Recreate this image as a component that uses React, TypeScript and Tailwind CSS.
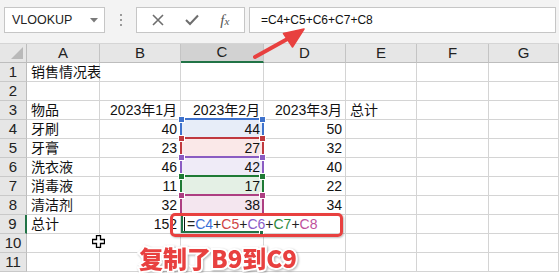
import React from "react";

const widths = [27, 73, 81, 83, 82, 71, 72, 70];
const letters = ["", "A", "B", "C", "D", "E", "F", "G"];

type Row = { a?: string; b?: string; c?: string; d?: string; e?: string };
const rows: Row[] = [
  { a: "销售情况表" },
  {},
  { a: "物品", b: "2023年1月", c: "2023年2月", d: "2023年3月", e: "总计" },
  { a: "牙刷", b: "40", c: "44", d: "50" },
  { a: "牙膏", b: "23", c: "27", d: "32" },
  { a: "洗衣液", b: "46", c: "42", d: "40" },
  { a: "消毒液", b: "11", c: "17", d: "22" },
  { a: "清洁剂", b: "32", c: "38", d: "34" },
  { a: "总计", b: "152" },
  {},
  {},
];

const cFills: Record<number, string> = {
  4: "bg-[#e7edf8]",
  5: "bg-[#fae8e8]",
  6: "bg-[#efebf7]",
  7: "bg-[#e4f0e5]",
  8: "bg-[#f4e6ef]",
};

const ranges = [
  { row: 4, border: "border-[#3f72cc]", sq: "bg-[#3f72cc]" },
  { row: 5, border: "border-[#c0393f]", sq: "bg-[#c0393f]" },
  { row: 6, border: "border-[#8a5cc2]", sq: "bg-[#8a5cc2]" },
  { row: 7, border: "border-[#1f7a35]", sq: "bg-[#1f7a35]" },
  { row: 8, border: "border-[#ad3f82]", sq: "bg-[#ad3f82]" },
];

function Cell({
  w,
  children,
  align = "left",
  fill = "",
}: {
  w: number;
  children?: React.ReactNode;
  align?: "left" | "right";
  fill?: string;
}) {
  return (
    <div
      className={`h-full shrink-0 border-r border-b border-[#d4d4d4] flex items-center whitespace-nowrap overflow-visible text-[14px] text-[#111] ${
        align === "right" ? "justify-end pr-[3px]" : "pl-[4px]"
      } ${fill}`}
      style={{ width: w }}
    >
      {children}
    </div>
  );
}

function RowHeader({ n, active }: { n: number; active?: boolean }) {
  return (
    <div
      className={`h-full shrink-0 w-[27px] bg-[#e6e6e6] border-b border-[#c9c9c9] flex items-center justify-center text-[15px] text-[#222] ${
        active ? "border-r-2 border-r-[#217346]" : "border-r border-r-[#bdbdbd]"
      }`}
    >
      {n}
    </div>
  );
}

export default function App() {
  return (
    <div className="relative w-[559px] h-[273px] overflow-hidden bg-white font-['Liberation_Sans','Noto_Sans_CJK_SC',sans-serif]">
      {/* Toolbar */}
      <div className="h-[44px] bg-[#f3f3f3] border-b border-[#d5d5d5] flex items-start pt-[7px] pl-[4px] pr-[3px]">
        <div className="w-[101px] h-[26px] bg-white border border-[#c6c6c6] flex items-center justify-between pl-[7px] pr-[6px] text-[12.5px] text-[#222]">
          <span>VLOOKUP</span>
          <svg width="8" height="5" viewBox="0 0 8 5">
            <path d="M0 0 L8 0 L4 4.5 Z" fill="#7a7a7a" />
          </svg>
        </div>
        <div className="w-[31px] h-[26px] flex flex-col items-center justify-center gap-[3px]">
          <div className="w-[2px] h-[2px] bg-[#9a9a9a]" />
          <div className="w-[2px] h-[2px] bg-[#9a9a9a]" />
          <div className="w-[2px] h-[2px] bg-[#9a9a9a]" />
        </div>
        <div className="w-[109px] h-[26px] bg-white border border-[#c6c6c6] flex items-center justify-around px-[4px]">
          <svg width="12" height="12" viewBox="0 0 12 12">
            <path d="M1 1 L11 11 M11 1 L1 11" stroke="#6e6e6e" strokeWidth="1.6" />
          </svg>
          <svg width="14" height="12" viewBox="0 0 14 12">
            <path d="M1 6 L5 10 L13 1.5" stroke="#6e6e6e" strokeWidth="2" fill="none" />
          </svg>
          <span className="font-['Liberation_Serif',serif] italic text-[15px] text-[#555] leading-none">
            f<span className="text-[11px]">x</span>
          </span>
        </div>
        <div className="ml-[4px] flex-1 h-[26px] bg-white border border-[#c6c6c6] flex items-center pl-[11px] text-[12px] text-[#111]">
          =C4+C5+C6+C7+C8
        </div>
      </div>

      {/* Column headers */}
      <div className="flex h-[19px]">
        {letters.map((l, i) =>
          i === 0 ? (
            <div
              key={i}
              className="h-full shrink-0 bg-[#e6e6e6] border-r border-b border-[#bdbdbd] relative"
              style={{ width: widths[0] }}
            >
              <svg className="absolute right-[3px] bottom-[3px]" width="12" height="12" viewBox="0 0 12 12">
                <path d="M12 0 L12 12 L0 12 Z" fill="#b9b9b9" />
              </svg>
            </div>
          ) : (
            <div
              key={i}
              className={`h-full shrink-0 flex items-center justify-center text-[15px] text-[#222] border-r border-[#c4c4c4] ${
                l === "C"
                  ? "bg-[#d2d2d2] border-b-2 border-b-[#217346]"
                  : "bg-[#e6e6e6] border-b border-b-[#bdbdbd]"
              }`}
              style={{ width: widths[i] }}
            >
              {l}
            </div>
          )
        )}
      </div>

      {/* Rows */}
      {rows.map((r, idx) => {
        const n = idx + 1;
        return (
          <div key={n} className="flex h-[19px]">
            <RowHeader n={n} active={n === 9} />
            <Cell w={widths[1]}>{r.a}</Cell>
            <Cell w={widths[2]} align="right">
              {r.b}
            </Cell>
            {n === 9 ? (
              <div className="h-full shrink-0 border-b border-[#d4d4d4] relative" style={{ width: widths[3] }}>
                <div className="absolute left-0 top-0 h-[18px] w-[140px] bg-white flex items-center text-[14px] whitespace-nowrap z-10">
                  <div className="absolute left-0 top-0 w-[2px] h-[18px] bg-[#217346]" />
                  <div className="absolute left-0 bottom-0 w-[80px] h-[2px] bg-[#217346]" />
                  <div className="absolute left-[78px] bottom-[-2px] w-[5px] h-[5px] bg-[#217346] border border-white" />
                  <div className="ml-[3px] w-[1px] h-[15px] bg-[#111]" />
                  <span className="ml-[2px] text-[#222]">=</span>
                  <span className="text-[#3a6fd8]">C4</span>
                  <span className="text-[#222]">+</span>
                  <span className="text-[#d04545]">C5</span>
                  <span className="text-[#222]">+</span>
                  <span className="text-[#8a5cc8]">C6</span>
                  <span className="text-[#222]">+</span>
                  <span className="text-[#2b8a3e]">C7</span>
                  <span className="text-[#222]">+</span>
                  <span className="text-[#c0509c]">C8</span>
                </div>
              </div>
            ) : (
              <Cell w={widths[3]} align="right" fill={cFills[n] ?? ""}>
                {r.c}
              </Cell>
            )}
            <Cell w={widths[4]} align="right">
              {r.d}
            </Cell>
            <Cell w={widths[5]}>{r.e}</Cell>
            <Cell w={widths[6]} />
            <Cell w={widths[7]} />
          </div>
        );
      })}

      {/* Range reference borders C4:C8 */}
      {ranges.map((rg) => {
        const top = 63 + (rg.row - 1) * 19 - 2;
        return (
          <div key={rg.row} className="absolute left-[180px] w-[84px] h-[21px]" style={{ top }}>
            <div className={`absolute inset-0 border-2 ${rg.border}`} />
            <div className={`absolute left-[-1px] top-[-1px] w-[5px] h-[5px] ${rg.sq} outline outline-1 outline-white`} />
            <div className={`absolute right-[-1px] top-[-1px] w-[5px] h-[5px] ${rg.sq} outline outline-1 outline-white`} />
          </div>
        );
      })}

      {/* Red highlight box */}
      <div className="absolute left-[170px] top-[213px] w-[173px] h-[24px] border-[3px] border-[#e8403f] rounded-[5px] shadow-[1px_1px_2px_rgba(0,0,0,0.25)] z-20" />

      {/* Arrow */}
      <svg className="absolute left-0 top-0 z-20" width="559" height="273" viewBox="0 0 559 273">
        <line x1="255" y1="57" x2="291" y2="37" stroke="#e8403f" strokeWidth="4" strokeLinecap="round" />
        <path d="M304 29 L283.5 33.5 L292.5 47 Z" fill="#e8403f" stroke="#e8403f" strokeWidth="1.5" strokeLinejoin="round" />
      </svg>

      {/* Cursor */}
      <svg className="absolute left-[92px] top-[235px] z-20" width="13" height="13" viewBox="0 0 13 13">
        <path
          d="M4.5 0.5 H8.5 V4.5 H12.5 V8.5 H8.5 V12.5 H4.5 V8.5 H0.5 V4.5 H4.5 Z"
          fill="white"
          stroke="black"
          strokeWidth="1.3"
        />
      </svg>

      {/* Caption */}
      <div className="absolute left-[139px] top-[246px] z-30 text-[24px] leading-none font-black text-[#e8403f] font-['Noto_Sans_CJK_SC',sans-serif] [paint-order:stroke_fill] [-webkit-text-stroke:4px_white] [filter:drop-shadow(1px_1px_1px_rgba(0,0,0,0.3))] whitespace-nowrap">
        复制了B9到C9
      </div>
    </div>
  );
}
